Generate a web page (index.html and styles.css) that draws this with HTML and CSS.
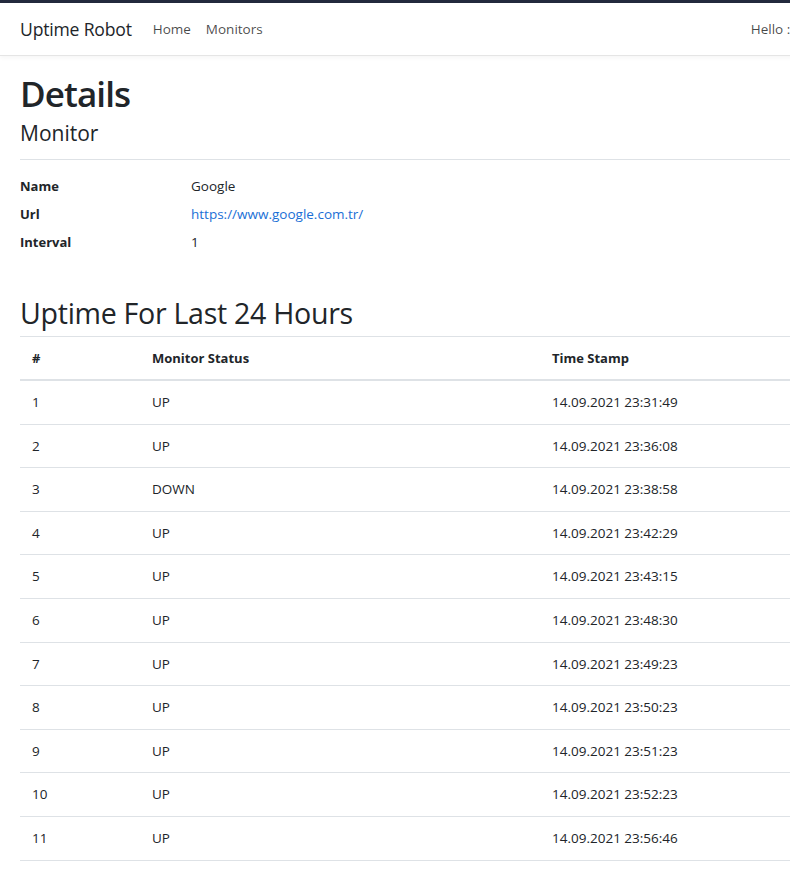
FILE: index.html
```html
<!DOCTYPE html>
<html lang="en">
<head>
<meta charset="utf-8">
<title>Details - Uptime Robot</title>
<link rel="stylesheet" href="styles.css">
</head>
<body>
<div class="page">
  <div class="topbar"></div>
  <header class="navbar">
    <a class="brand" href="#">Uptime Robot</a>
    <nav class="nav-links">
      <a href="#">Home</a>
      <a href="#">Monitors</a>
    </nav>
    <span class="hello">Hello :)</span>
  </header>
  <main class="container">
    <h1 class="title">Details</h1>
    <h4 class="subtitle">Monitor</h4>
    <hr class="divider">
    <dl class="details">
      <dt>Name</dt><dd>Google</dd>
      <dt>Url</dt><dd><a href="#">https://www.google.com.tr/</a></dd>
      <dt>Interval</dt><dd>1</dd>
    </dl>
    <h2 class="section-title">Uptime For Last 24 Hours</h2>
    <table class="table">
      <colgroup><col class="c1"><col class="c2"><col class="c3"></colgroup>
      <thead>
        <tr><th>#</th><th>Monitor Status</th><th>Time Stamp</th></tr>
      </thead>
      <tbody>
        <tr><td>1</td><td>UP</td><td>14.09.2021 23:31:49</td></tr>
        <tr><td>2</td><td>UP</td><td>14.09.2021 23:36:08</td></tr>
        <tr><td>3</td><td>DOWN</td><td>14.09.2021 23:38:58</td></tr>
        <tr><td>4</td><td>UP</td><td>14.09.2021 23:42:29</td></tr>
        <tr><td>5</td><td>UP</td><td>14.09.2021 23:43:15</td></tr>
        <tr><td>6</td><td>UP</td><td>14.09.2021 23:48:30</td></tr>
        <tr><td>7</td><td>UP</td><td>14.09.2021 23:49:23</td></tr>
        <tr><td>8</td><td>UP</td><td>14.09.2021 23:50:23</td></tr>
        <tr><td>9</td><td>UP</td><td>14.09.2021 23:51:23</td></tr>
        <tr><td>10</td><td>UP</td><td>14.09.2021 23:52:23</td></tr>
        <tr><td>11</td><td>UP</td><td>14.09.2021 23:56:46</td></tr>
      </tbody>
    </table>
  </main>
</div>
</body>
</html>
```
FILE: styles.css
```css
html, body {
  margin: 0;
  padding: 0;
  overflow: hidden;
  background: #fff;
}
body {
  font-family: "Open Sans", "Noto Sans", sans-serif;
  color: #212529;
  font-size: 13.5px;
}
.page {
  width: 1000px;
}
.topbar {
  height: 3px;
  background: #232a3d;
}
.navbar {
  height: 52px;
  display: flex;
  align-items: center;
  padding-left: 20px;
  border-bottom: 1px solid #e5e5e5;
  box-shadow: 0 2px 4px rgba(0,0,0,0.04);
}
.brand {
  font-size: 17.6px;
  color: #212529;
  text-decoration: none;
  margin-right: 21px;
  letter-spacing: -0.2px;
}
.nav-links {
  display: flex;
  gap: 15px;
}
.nav-links a {
  font-size: 13.5px;
  color: rgba(0,0,0,0.72);
  text-decoration: none;
}
.hello {
  margin-left: 488px;
  font-size: 13.5px;
  color: rgba(0,0,0,0.72);
}
.container {
  padding-left: 20px;
  width: 770px;
}
.title {
  font-size: 35px;
  font-weight: 600;
  margin: 16px 0 0;
  line-height: 44px;
  letter-spacing: -0.9px;
}
.subtitle {
  font-size: 21px;
  font-weight: 500;
  margin: 4px 0 0;
  line-height: 26px;
}
.divider {
  border: 0;
  border-top: 1px solid #dee2e6;
  margin: 13px 0 0;
}
.details {
  display: grid;
  grid-template-columns: 171px 1fr;
  row-gap: 0;
  margin: 12px 0 0;
}
.details dt {
  font-weight: 700;
  line-height: 28px;
  font-size: 13px;
}
.details dd {
  margin: 0;
  line-height: 28px;
}
.details a {
  color: #1a6fd6;
  text-decoration: none;
}
.section-title {
  font-size: 28.6px;
  font-weight: 500;
  margin: 39px 0 0;
  line-height: 36px;
  letter-spacing: -0.3px;
}
.table {
  width: 770px;
  border-collapse: collapse;
  table-layout: fixed;
  margin-top: 5px;
}
.c1 { width: 120px; }
.c2 { width: 400px; }
.table th, .table td {
  text-align: left;
  padding: 12px 12px;
  border-top: 1px solid #dee2e6;
  white-space: nowrap;
}
.table th {
  font-weight: 700;
  font-size: 13px;
  line-height: 18px;
  border-bottom: 2px solid #dee2e6;
}
.table td {
  line-height: 18.6px;
}
.table tbody tr:last-child td {
  border-bottom: 1px solid #dee2e6;
}
```
